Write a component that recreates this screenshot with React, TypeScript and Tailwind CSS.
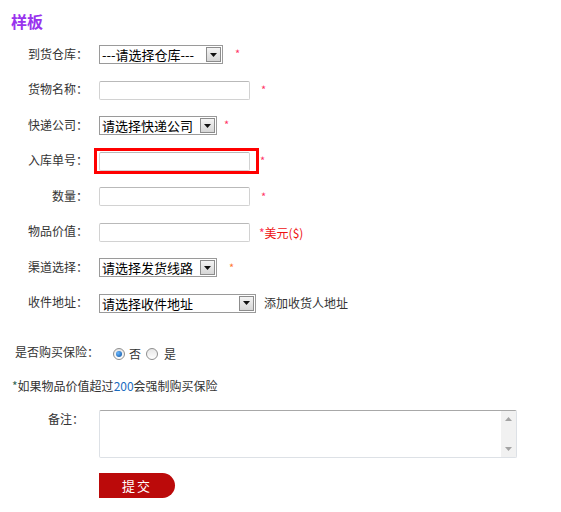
import React from "react";

const font = { fontFamily: '"Noto Sans CJK SC", "Liberation Sans", sans-serif' };

function Label({ children }: { children: React.ReactNode }) {
  return (
    <div className="w-[88px] shrink-0 text-right text-[12px] leading-[14px] text-[#333333] -mt-[2px]">
      {children}
    </div>
  );
}

function Star({ className = "" }: { className?: string }) {
  return <span className={"text-[11px] leading-none text-[#ff3366] " + className}>*</span>;
}

function Select({ text, width, className = "" }: { text: string; width: string; className?: string }) {
  return (
    <div
      className={
        "flex h-[19px] items-center justify-between border border-[#9a9a9a] bg-white pl-[2px] pr-[1px] " +
        width +
        " " +
        className
      }
    >
      <span className="whitespace-nowrap text-[13px] leading-[17px] text-black">{text}</span>
      <span className="flex h-[15px] w-[15px] items-center justify-center border border-[#8c8c8c] bg-gradient-to-b from-[#f4f4f4] to-[#d6d6d6]">
        <svg width="7" height="4" viewBox="0 0 7 4">
          <path d="M0 0h7L3.5 4z" fill="#111" />
        </svg>
      </span>
    </div>
  );
}

function Input() {
  return (
    <div className="h-[19px] w-[151px] rounded-[2px] border border-[#d2d2d2] border-t-[#b9b9b9] bg-white" />
  );
}

function Radio({ checked }: { checked?: boolean }) {
  return (
    <span className="relative inline-flex h-[12px] w-[12px] items-center justify-center rounded-full border border-[#8e8e8e] bg-gradient-to-b from-[#e6e6e6] to-[#ffffff]">
      {checked && (
        <span className="h-[6px] w-[6px] rounded-full bg-[radial-gradient(circle_at_35%_35%,#6ab8ff,#0a4f9e)]" />
      )}
    </span>
  );
}

export default function App() {
  return (
    <div className="h-[512px] w-[561px] bg-white" style={font}>
      <div className="pl-[11px] pt-[10px] text-[16px] font-bold leading-[22px] text-[#9933ee]">样板</div>
      <div className="mt-[5px] flex flex-col">
        <div className="flex h-[35.5px] items-center">
          <Label>到货仓库：</Label>
          <Select text="---请选择仓库---" width="w-[124px]" className="ml-[11px]" />
          <Star className="ml-[12px] -mt-[3px]" />
        </div>
        <div className="flex h-[35.5px] items-center">
          <Label>货物名称：</Label>
          <div className="ml-[11px]">
            <Input />
          </div>
          <Star className="ml-[11px] -mt-[1px]" />
        </div>
        <div className="flex h-[35.5px] items-center">
          <Label>快递公司：</Label>
          <Select text="请选择快递公司" width="w-[118px]" className="ml-[11px]" />
          <Star className="ml-[7px] -mt-[3px]" />
        </div>
        <div className="flex h-[35.5px] items-center">
          <Label>入库单号：</Label>
          <div className="relative ml-[11px]">
            <Input />
            <div className="absolute -left-[5px] -top-[4px] h-[26px] w-[165px] border-[3px] border-[#ff0000]" />
          </div>
          <Star className="ml-[10px] -mt-[1px]" />
        </div>
        <div className="flex h-[35.5px] items-center">
          <Label>数量：</Label>
          <div className="ml-[11px]">
            <Input />
          </div>
          <Star className="ml-[11px] -mt-[1px]" />
        </div>
        <div className="flex h-[35.5px] items-center">
          <Label>物品价值：</Label>
          <div className="ml-[11px]">
            <Input />
          </div>
          <span className="ml-[9px] mt-[2px] text-[12px] leading-[14px] text-[#ee1111]">
            <span className="text-[#ff3366]">*</span>美元($)
          </span>
        </div>
        <div className="flex h-[35.5px] items-center">
          <Label>渠道选择：</Label>
          <Select text="请选择发货线路" width="w-[118px]" className="ml-[11px]" />
          <Star className="ml-[12px] -mt-[1px] text-[#ff7733]" />
        </div>
        <div className="flex h-[35.5px] items-center">
          <Label>收件地址：</Label>
          <Select text="请选择收件地址" width="w-[157px]" className="ml-[11px]" />
          <span className="ml-[8px] text-[12px] leading-[14px] text-[#333333]">添加收货人地址</span>
        </div>
      </div>

      <div className="mt-[23px] flex h-[20px] items-center pl-[15px]">
        <span className="-mt-[4px] text-[12px] leading-[14px] text-[#333333]">是否购买保险：</span>
        <span className="ml-[14px] flex items-center">
          <Radio checked />
          <span className="ml-[4px] text-[12px] leading-[14px] text-[#333333]">否</span>
          <span className="ml-[5px] flex items-center">
            <Radio />
          </span>
          <span className="ml-[6px] text-[12px] leading-[14px] text-[#333333]">是</span>
        </span>
      </div>

      <div className="mt-[12px] flex h-[20px] items-center pl-[12px] text-[12px] leading-[14px] text-[#333333]">
        <span className="text-[#336655]">*</span>如果物品价值超过<span className="text-[#1a6bbf]">200</span>会强制购买保险
      </div>

      <div className="mt-[14px] flex">
        <div className="w-[84px] shrink-0 pt-[2px] text-right text-[12px] leading-[14px] text-[#333333]">备注：</div>
        <div className="ml-[15px] flex h-[48px] w-[418px] rounded-[2px] border border-[#dde1e6] border-t-[#a8a8a8] bg-white">
          <div className="flex-1" />
          <div className="flex w-[15px] flex-col items-center justify-between bg-[#f1f1f1] py-[6px]">
            <svg width="7" height="4" viewBox="0 0 7 4">
              <path d="M0 4h7L3.5 0z" fill="#a3a3a3" />
            </svg>
            <svg width="7" height="4" viewBox="0 0 7 4">
              <path d="M0 0h7L3.5 4z" fill="#a3a3a3" />
            </svg>
          </div>
        </div>
      </div>

      <div className="mt-[15px] pl-[99px]">
        <button className="flex h-[25px] w-[76px] items-center justify-center rounded-r-full bg-[#bb0a0a] text-[13px] leading-none tracking-[2px] text-white">
          提交
        </button>
      </div>
    </div>
  );
}
